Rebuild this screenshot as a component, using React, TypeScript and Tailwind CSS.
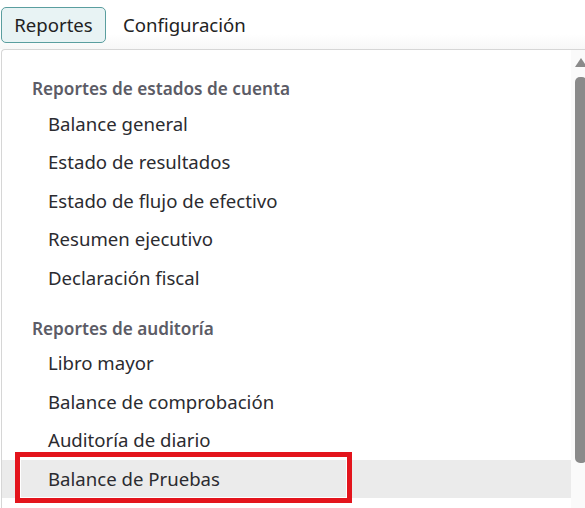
import React from "react";

const section1 = [
  "Balance general",
  "Estado de resultados",
  "Estado de flujo de efectivo",
  "Resumen ejecutivo",
  "Declaración fiscal",
];
const section2 = [
  "Libro mayor",
  "Balance de comprobación",
  "Auditoría de diario",
];

function Item({ label, active }: { label: string; active?: boolean }) {
  return (
    <div
      className={
        "relative flex h-[38.5px] items-center pl-[46px] text-[18.6px] text-[#2b2b30] " +
        (active ? "bg-[#ebebeb]" : "")
      }
    >
      <span>{label}</span>
      {active && (
        <div className="pointer-events-none absolute left-[13px] top-[-8px] h-[51px] w-[337px] border-[5px] border-[#e3141c]">
          <div className="h-full w-full border border-white" />
        </div>
      )}
    </div>
  );
}

function Header({ label }: { label: string }) {
  return (
    <div className="flex h-[31px] items-center pl-[30px] text-[17.2px] font-semibold text-[#5c5c66]">
      {label}
    </div>
  );
}

export default function App() {
  return (
    <div
      className="h-[508px] w-[585px] overflow-hidden bg-white"
      style={{ fontFamily: '"Noto Sans", "Open Sans", sans-serif' }}
    >
      <div className="flex h-[49px] items-start bg-gradient-to-b from-white from-70% to-[#f7f7f7] pl-[1px] pt-[7px]">
        <div className="flex h-[36px] w-[105px] items-center justify-center rounded-[5px] border border-[#5a9e9f] bg-[#e8f3f4] text-[18.6px] text-[#222]">
          Reportes
        </div>
        <div className="flex h-[36px] items-center pl-[17px] text-[18.6px] text-[#222]">
          Configuración
        </div>
      </div>
      <div className="ml-[1px] flex h-[459px] rounded-tl-[4px] border-l border-t border-[#d6d6d6] bg-white">
        <div className="w-[569px] pt-[23.5px]">
          <Header label="Reportes de estados de cuenta" />
          {section1.map((s) => (
            <Item key={s} label={s} />
          ))}
          <div className="h-[16px]" />
          <Header label="Reportes de auditoría" />
          {section2.map((s) => (
            <Item key={s} label={s} />
          ))}
          <Item label="Balance de Pruebas" active />
        </div>
        <div className="flex w-[14px] flex-col items-end bg-[#fafafa] pt-[8px]">
          <svg width="12" height="9" viewBox="0 0 12 9" className="mr-[-2px]">
            <polygon points="6,0 12,9 0,9" fill="#8a8a8a" />
          </svg>
          <div className="mr-[-2px] mt-[10px] h-[386px] w-[12px] rounded-[5px] bg-[#8a8a8a]" />
        </div>
      </div>
    </div>
  );
}
